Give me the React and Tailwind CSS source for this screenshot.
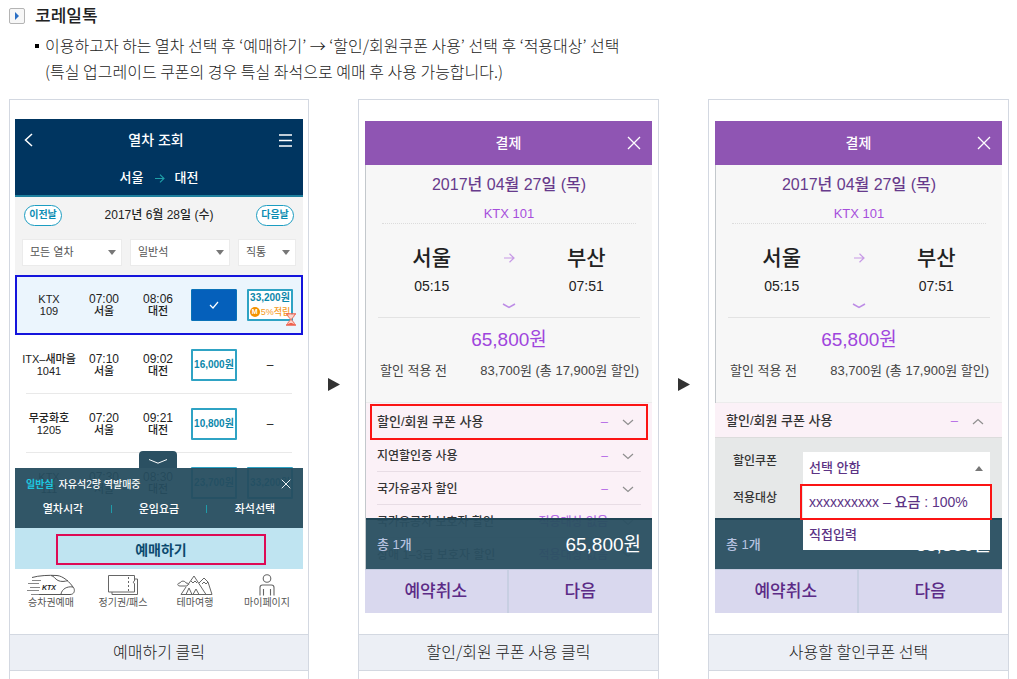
import React from "react";

const FONT = "font-['Liberation_Sans','Noto_Sans_CJK_KR',sans-serif]";

/* ---------- small drawings ---------- */

function Chevron({ up = false, className = "" }) {
  return (
    <svg viewBox="0 0 12 7" className={className} fill="none" stroke="currentColor" strokeWidth="1.2" aria-hidden="true">
      <path d={up ? "M1 6L6 1.5L11 6" : "M1 1L6 5.5L11 1"} />
    </svg>
  );
}

function ThinArrow({ className = "" }) {
  return (
    <svg viewBox="0 0 12 10" className={className} fill="none" stroke="currentColor" strokeWidth="1.2" aria-hidden="true">
      <path d="M1 5H11M6.5 0.8L11 5L6.5 9.2" />
    </svg>
  );
}

function Cross({ className = "" }) {
  return (
    <svg viewBox="0 0 14 14" className={className} fill="none" stroke="currentColor" strokeWidth="1.3" aria-hidden="true">
      <path d="M1 1L13 13M13 1L1 13" />
    </svg>
  );
}

function StepArrow() {
  return (
    <div className="flex w-[49px] items-center justify-center pb-[9px] text-[#333]">
      <svg viewBox="0 0 12 13" className="h-[13px] w-3" fill="currentColor" aria-hidden="true">
        <path d="M0 0L12 6.5L0 13Z" />
      </svg>
    </div>
  );
}

function Hourglass() {
  return (
    <svg viewBox="0 0 10 13" className="absolute -right-[5px] -bottom-[7px] h-[13px] w-[10px]" fill="none" stroke="#f0604d" aria-hidden="true">
      <path d="M0 1H10M0 12H10" strokeWidth="1.6" />
      <path d="M1.5 1.5C1.5 4 4.4 5 4.4 6.5C4.4 8 1.5 9 1.5 11.5H8.5C8.5 9 5.6 8 5.6 6.5C5.6 5 8.5 4 8.5 1.5" fill="#fbd5cd" strokeWidth="1" />
      <path d="M2.5 11.3C3.5 9.4 6.5 9.4 7.5 11.3Z" fill="#f0604d" stroke="none" />
    </svg>
  );
}

function TrainIcon() {
  return (
    <svg viewBox="0 0 48 22" className="h-[22px] w-12" fill="none" stroke="#555" strokeWidth="1" aria-hidden="true">
      <path d="M5 3.5C12 1.5 22 1 30 1.5C36 2 43 8 47 14.5C48 17 47 20.5 43 20.5H12" />
      <path d="M5 6.500H14M1 9.500H12M3 13.500H13M0 16.500H12M4 20.500H12" stroke="#888" />
      <path d="M24 1.500C27 2 28 5 31 6.500C34 8 38 7.500 41 6.500M34 20C35 15 40 12 46 13" />
      <text x="15" y="16" fontSize="7" fontWeight="700" fontStyle="italic" fontFamily="Liberation Sans" fill="#222" stroke="none">KTX</text>
    </svg>
  );
}

function TicketIcon() {
  return (
    <svg viewBox="0 0 30 20" className="h-5 w-[30px]" fill="none" stroke="#666" strokeWidth="1" aria-hidden="true">
      <path d="M26.500 4H29.500V19.500H4V17" />
      <path d="M0.500 0.500H26.500V6C25 6 25 8.500 26.500 8.500V17H0.500Z" />
      <path d="M20.500 2V16" strokeDasharray="2 2" />
    </svg>
  );
}

function MountainIcon() {
  return (
    <svg viewBox="0 0 36 20" className="h-5 w-9" fill="none" stroke="#666" strokeWidth="1" strokeLinejoin="round" aria-hidden="true">
      <path d="M10 11L17 1L29 19.500H4L9 12M14 6L16 8L18 6L20 8" />
      <path d="M22 8L27 3L31 7L35 19.500H29M25 9L27 7L29 9L31 7" />
      <path d="M10 11H3C0 11 0 8 3 8C4 5.500 8 5.500 9 8C11 8 12 9 11.500 10" />
      <path d="M9 19.500L12 13L15 19.500M16 19.500L19 14L22 19.500" />
    </svg>
  );
}

function PersonIcon() {
  return (
    <svg viewBox="0 0 18 22" className="h-[22px] w-[18px]" fill="none" stroke="#666" strokeWidth="1.1" aria-hidden="true">
      <circle cx="9" cy="4.500" r="3.800" />
      <path d="M2 21.500V13.500C2 12 3 11 4.500 11H13.500C15 11 16 12 16 13.500V21.500M5.500 15V21.500M12.500 15V21.500" />
    </svg>
  );
}

/* ---------- step frame ---------- */

function Step({ caption, children }) {
  return (
    <section className="flex min-w-0 flex-col border-x border-t border-[#d3d8e1]">
      {children}
      <h2 className="border-y border-[#d3d8e1] bg-[#eceff5] pb-[2px] text-center text-[16px] leading-[33px] font-light text-[#222]">
        {caption}
      </h2>
      <div className="min-h-2 flex-1" />
    </section>
  );
}

/* ---------- train search screen ---------- */

function FilterSelect({ label, value, className }) {
  return (
    <div className={"relative " + className}>
      <select
        aria-label={label}
        className="h-[27px] w-full appearance-none border border-[#ebebeb] bg-white pl-[7px] text-[11px] text-[#555]"
        defaultValue={value}
      >
        <option>{value}</option>
      </select>
      <svg viewBox="0 0 8 5" className="pointer-events-none absolute top-[11px] right-[6px] h-[5px] w-2" fill="#777" aria-hidden="true">
        <path d="M0 0H8L4 5Z" />
      </svg>
    </div>
  );
}

function Stacked({ top, bottom, topClass = "text-[11px]" }) {
  return (
    <>
      <span className={"block leading-3 " + topClass}>{top}</span>
      <span className="block text-[11px] leading-3">{bottom}</span>
    </>
  );
}

function PriceButton({ children }) {
  return (
    <button className="mx-auto flex h-8 w-[46px] items-center justify-center rounded-[1px] border-2 border-[#2fa3c4] bg-white text-[10px] font-bold whitespace-nowrap text-[#0b87ab]">
      {children}
    </button>
  );
}

function SavingPriceButton({ price }) {
  return (
    <button className="relative mx-auto flex h-8 w-[46px] flex-col items-center justify-between rounded-[1px] border-2 border-[#2fa3c4] bg-white text-[10px] leading-[13px] font-bold whitespace-nowrap text-[#0b87ab]">
      <span>{price}</span>
      <span className="flex items-center gap-px text-[9px] leading-[14px] font-medium text-[#f59a23]">
        <span className="flex size-[10px] items-center justify-center rounded-full bg-[#f39200] text-[7px] font-bold text-white">M</span>
        5%적립
      </span>
      <Hourglass />
    </button>
  );
}

const DIVIDED =
  "h-[59px] bg-[linear-gradient(#e9e9e9,#e9e9e9)] bg-[size:calc(100%-22px)_1px] bg-bottom bg-no-repeat";

const TRAINS = [
  {
    name: "KTX", no: "109", dep: "07:00", arr: "08:06",
    row: "h-[60px] bg-[#ebf5fd] outline-2 -outline-offset-2 outline-[#1414dc]",
    seat: (
      <button aria-label="선택됨" className="mx-auto flex h-8 w-[46px] items-center justify-center rounded-[1px] border border-[#0a72b8] bg-[#0560bb] text-white">
        <svg viewBox="0 0 10 8" className="h-2 w-[10px]" fill="none" stroke="currentColor" strokeWidth="1.200" aria-hidden="true">
          <path d="M1 4L4 7L9 1" />
        </svg>
      </button>
    ),
    special: <SavingPriceButton price="33,200원" />,
  },
  { name: "ITX–새마을", no: "1041", dep: "07:10", arr: "09:02", row: DIVIDED, seat: <PriceButton>16,000원</PriceButton>, special: "–" },
  { name: "무궁화호", no: "1205", dep: "07:20", arr: "09:21", row: DIVIDED, seat: <PriceButton>10,800원</PriceButton>, special: "–" },
  { name: "KTX", no: "111", dep: "07:30", arr: "08:30", row: "h-[59px]", seat: <PriceButton>23,700원</PriceButton>, special: <PriceButton>33,200원</PriceButton> },
];

function TrainSearch() {
  return (
    <div className={"px-[5px] pt-[19px] pb-[21px] " + FONT}>
      <header className="border-b-2 border-[#1d7f9d] bg-[#003560] text-white">
        <div className="flex h-[42px] items-center justify-between pr-[11px] pl-[9px]">
          <button aria-label="이전">
            <svg viewBox="0 0 9 14" className="h-[14px] w-[9px]" fill="none" stroke="currentColor" strokeWidth="1.500" aria-hidden="true">
              <path d="M8 1L1.500 7L8 13" />
            </svg>
          </button>
          <h3 className="text-[14px] leading-5 font-medium">열차 조회</h3>
          <button aria-label="메뉴">
            <svg viewBox="0 0 13 13" className="size-[13px]" stroke="currentColor" strokeWidth="1.300" aria-hidden="true">
              <path d="M0 1H13M0 6.500H13M0 12H13" />
            </svg>
          </button>
        </div>
        <div className="flex h-[34px] items-center justify-center gap-[10px] text-[13px] leading-5 font-medium">
          <span>서울</span>
          <ThinArrow className="h-[9px] w-[11px] text-[#1fa0a8]" />
          <span>대전</span>
        </div>
      </header>

      <div className="h-[78px] bg-[#f3f3f3] px-[7px]">
        <div className="flex h-9 items-center justify-between px-[2px]">
          <button className="h-[21px] w-[38px] rounded-full border border-[#1b9dc2] bg-white text-[10px] leading-none font-bold text-[#0b8db3]">이전날</button>
          <span className="text-[12px] leading-5 font-medium text-[#222]">2017년 6월 28일 (수)</span>
          <button className="h-[21px] w-[38px] rounded-full border border-[#1b9dc2] bg-white text-[10px] leading-none font-bold text-[#0b8db3]">다음날</button>
        </div>
        <div className="mt-[6px] flex gap-2">
          <FilterSelect label="열차 종류" value="모든 열차" className="flex-[100]" />
          <FilterSelect label="좌석 종류" value="일반석" className="flex-[100]" />
          <FilterSelect label="경로" value="직통" className="flex-[58]" />
        </div>
      </div>

      <div className="relative pb-4">
        <table className="w-full table-fixed border-collapse text-center font-medium text-[#222]">
          <colgroup>
            <col className="w-[68px]" />
            <col className="w-[42px]" />
            <col className="w-[66px]" />
            <col className="w-[46px]" />
            <col />
          </colgroup>
          <tbody>
            {TRAINS.map((t) => (
              <tr key={t.no} className={t.row}>
                <td className="whitespace-nowrap"><Stacked top={t.name} bottom={t.no} /></td>
                <td><Stacked top={t.dep} bottom="서울" topClass="text-[12px]" /></td>
                <td><Stacked top={t.arr} bottom="대전" topClass="text-[12px]" /></td>
                <td>{t.seat}</td>
                <td className="text-[12px]">{t.special}</td>
              </tr>
            ))}
          </tbody>
        </table>

        <div className="absolute inset-x-0 bottom-0 h-[60px] bg-[#264d5f]/95 text-white">
          <button aria-label="접기" className="absolute -top-[17px] left-[43%] flex h-[17px] w-[38px] items-center justify-center rounded-t-[4px] bg-[#2b5062]">
            <svg viewBox="0 0 18 5" className="mt-[4px] h-[5px] w-[18px]" fill="none" stroke="currentColor" strokeWidth="1" aria-hidden="true">
              <path d="M0 0.500L9 4.200L18 0.500" />
            </svg>
          </button>
          <div className="flex h-8 items-center gap-[5px] pr-3 pl-[11px] text-[10px] font-medium">
            <strong className="text-[#1cc8e0]">일반실</strong>
            <span className="flex-1">자유석2량 역발매중</span>
            <button aria-label="닫기"><Cross className="size-[10px]" /></button>
          </div>
          <div className="grid h-[18px] grid-cols-3 items-center text-center text-[11px] leading-[18px] font-medium">
            <button>열차시각</button>
            <button className="relative before:absolute before:top-[5px] before:left-0 before:h-2 before:w-px before:bg-[#1f9caa] after:absolute after:top-[5px] after:right-0 after:h-2 after:w-px after:bg-[#1f9caa]">운임요금</button>
            <button>좌석선택</button>
          </div>
        </div>
      </div>

      <div className="h-[41px] bg-[#bfe4f1] pt-[6px] pr-[37px] pl-[41px]">
        <button className="h-[31px] w-full border-2 border-[#de0a55] text-[14px] leading-none font-bold text-[#0c4a6e]">예매하기</button>
      </div>

      <nav className="grid h-11 grid-cols-4 text-[10px] leading-[14px] text-[#555]">
        {[
          ["승차권예매", <TrainIcon key="i" />],
          ["정기권/패스", <TicketIcon key="i" />],
          ["테마여행", <MountainIcon key="i" />],
          ["마이페이지", <PersonIcon key="i" />],
        ].map(([label, icon]) => (
          <a key={label} href="#" className="flex flex-col items-center pt-1 whitespace-nowrap">
            <span className="flex h-[23px] items-center">{icon}</span>
            {label}
          </a>
        ))}
      </nav>
    </div>
  );
}

/* ---------- payment screen ---------- */

function Payment({ children }) {
  return (
    <div className={"px-[6px] pt-[21px] pb-[21px] " + FONT}>
      <header className="flex h-11 items-center justify-end bg-[#8f55b3] pr-[11px] text-white">
        <h3 className="flex-1 pl-[25px] text-center text-[14px] leading-5 font-medium">결제</h3>
        <button aria-label="닫기"><Cross className="size-[14px]" /></button>
      </header>
      <div className="border-l border-[#c3c8cc] bg-[#f7f7f7] text-center">
        <p className="pt-[10px] text-[16px] leading-5 font-medium text-[#673b8c]">2017년 04월 27일 (목)</p>
        <p className="mt-[11px] text-[13px] leading-4 text-[#a64fdc]">KTX 101</p>
        <div className="mx-4 mt-px border-t border-dotted border-[#dcdcdc]" />
        <div className="mt-5 grid grid-cols-3 px-[27px] text-[#222]">
          <div>
            <p className="text-[21px] leading-7 font-medium">서울</p>
            <p className="mt-[5px] text-[14px] leading-[18px]">05:15</p>
          </div>
          <div className="flex h-7 items-center justify-center text-[#c79ae6]">
            <ThinArrow className="h-[10px] w-3" />
          </div>
          <div>
            <p className="text-[21px] leading-7 font-medium">부산</p>
            <p className="mt-[5px] text-[14px] leading-[18px]">07:51</p>
          </div>
        </div>
        <svg viewBox="0 0 14 6" className="mx-auto mt-2 block h-[6px] w-[14px]" fill="none" stroke="#bd8ce6" strokeWidth="1.500" aria-hidden="true">
          <path d="M1 1L7 4.500L13 1" />
        </svg>
        <div className="mx-3 mt-2 border-t border-[#e3e3e3]" />
        <p className="mt-[10px] text-[19px] leading-6 text-[#9f45dd]">65,800원</p>
        <div className="mt-[10px] flex justify-between border-b border-[#ececec] pr-[13px] pb-[22px] pl-[14px] text-[13px] leading-[18px] text-[#444]">
          <span>할인 적용 전</span>
          <span>83,700원 (총 17,900원 할인)</span>
        </div>
      </div>
      {children}
      <div className="grid h-11 grid-cols-2 border-t border-[#c5cbe0] bg-[#d9d8ee] text-[17px] leading-none font-medium text-[#5c2b86]">
        <button className="border-r-2 border-[#c8cfe2]">예약취소</button>
        <button>다음</button>
      </div>
    </div>
  );
}

function CouponRow({ label, value = "–", open = false, className }) {
  return (
    <button className={"relative flex w-full items-center pt-[2px] pr-[18px] pl-[11px] text-left font-medium text-[#333] " + className}>
      <span className="flex-1">{label}</span>
      <span className="text-[#b56be6]">{value}</span>
      <Chevron up={open} className="ml-[14px] h-[7px] w-3 text-[#8f8f8f]" />
    </button>
  );
}

function DiscountList() {
  return (
    <div className="relative border-l border-[#c3c8cc] bg-[#fbf1f7]">
      <div className="relative">
        <CouponRow label="할인/회원 쿠폰 사용" className="h-9 text-[13px]" />
        <div className="pointer-events-none absolute top-px right-[4px] -bottom-px left-[4px] border-2 border-[#fb1414]" />
      </div>
      {[
        ["지연할인증 사용", "–"],
        ["국가유공자 할인", "–"],
        ["국가유공자 보호자 할인", "적용대상 없음"],
      ].map(([label, value]) => (
        <div key={label}>
          <CouponRow label={label} value={value} className="h-8 text-[12px]" />
          <div className="mx-[11px] h-px bg-[#e8dde5]" />
        </div>
      ))}
      <CouponRow label="장애 1–3급 보호자 할인" value="적용대상 없음" className="h-[31px] text-[12px]" />
      <Total className="absolute inset-x-0 bottom-0" />
    </div>
  );
}

function Total({ className = "" }) {
  return (
    <div className={"flex h-[51px] items-center justify-between border-t-2 border-[#1f4455] bg-[#2b5062]/96 pr-[11px] pl-[11px] " + className}>
      <span className="text-[13px] font-medium text-[#b7c3e0]">총 1개</span>
      <span className="text-[19px] leading-6 text-white">65,800원</span>
    </div>
  );
}

function CouponPicker() {
  return (
    <div className="relative">
      <CouponRow label="할인/회원 쿠폰 사용" open className="h-[34px] bg-[#fbf1f7] text-[13px]" />
      <div className="flex h-[81px] flex-col gap-[17px] border-t border-[#dcdcdc] bg-[#e6e8e8] pt-[13px] pl-[18px] text-[12px] leading-5 font-medium text-[#333]">
        <span id="coupon-label">할인쿠폰</span>
        <span>적용대상</span>
      </div>
      <Total />
      <div className="absolute top-[49px] right-[12px] left-[88px] bg-white font-medium text-[#5c3385]">
        <button aria-labelledby="coupon-label" aria-expanded="true" className="flex h-8 w-full items-center justify-between pr-[7px] pl-[6px] text-[13px]">
          선택 안함
          <svg viewBox="0 0 8 5" className="h-[5px] w-2" fill="#777" aria-hidden="true">
            <path d="M0 5H8L4 0Z" />
          </svg>
        </button>
        <ul role="listbox" aria-labelledby="coupon-label">
          <li role="option" aria-selected="true" className="-mr-[2px] -ml-[3px] flex h-9 items-center border-2 border-[#fb1414] pl-[7px] text-[14px] whitespace-nowrap">
            xxxxxxxxxx – 요금 : 100%
          </li>
          <li role="option" aria-selected="false" className="flex h-[30px] items-center pl-[6px] text-[13px]">
            직접입력
          </li>
        </ul>
      </div>
    </div>
  );
}

/* ---------- page ---------- */

export default function App() {
  return (
    <main className="flex min-h-screen flex-col bg-white pr-2 pl-[9px] font-['Noto_Sans_CJK_KR',sans-serif] text-[#222]">
      <div className="flex h-8 items-center gap-[10px]">
        <span className="flex size-4 items-center justify-center rounded-[2px] border border-[#b4b4b4] bg-[#f7f7f7]">
          <svg viewBox="0 0 4 8" className="h-2 w-1" fill="#2b6fc4" aria-hidden="true">
            <path d="M0 0L4 4L0 8Z" />
          </svg>
        </span>
        <h1 className="pb-[2px] text-[17px] leading-6 font-medium">코레일톡</h1>
      </div>
      <ul className="pb-[15px] pl-[26px] text-[16px] leading-[26px] font-light">
        <li className="flex gap-[6px]">
          <span className="mt-3 size-1 shrink-0 bg-black" />
          <p>
            이용하고자 하는 열차 선택 후 ‘예매하기’ → ‘할인/회원쿠폰 사용’ 선택 후 ‘적용대상’ 선택
            <br />
            (특실 업그레이드 쿠폰의 경우 특실 좌석으로 예매 후 사용 가능합니다.)
          </p>
        </li>
      </ul>

      <div className="grid flex-1 grid-cols-[300fr_auto_301fr_auto_301fr]">
        <Step caption="예매하기 클릭"><TrainSearch /></Step>
        <StepArrow />
        <Step caption="할인/회원 쿠폰 사용 클릭">
          <Payment><DiscountList /></Payment>
        </Step>
        <StepArrow />
        <Step caption="사용할 할인쿠폰 선택">
          <Payment><CouponPicker /></Payment>
        </Step>
      </div>
    </main>
  );
}
